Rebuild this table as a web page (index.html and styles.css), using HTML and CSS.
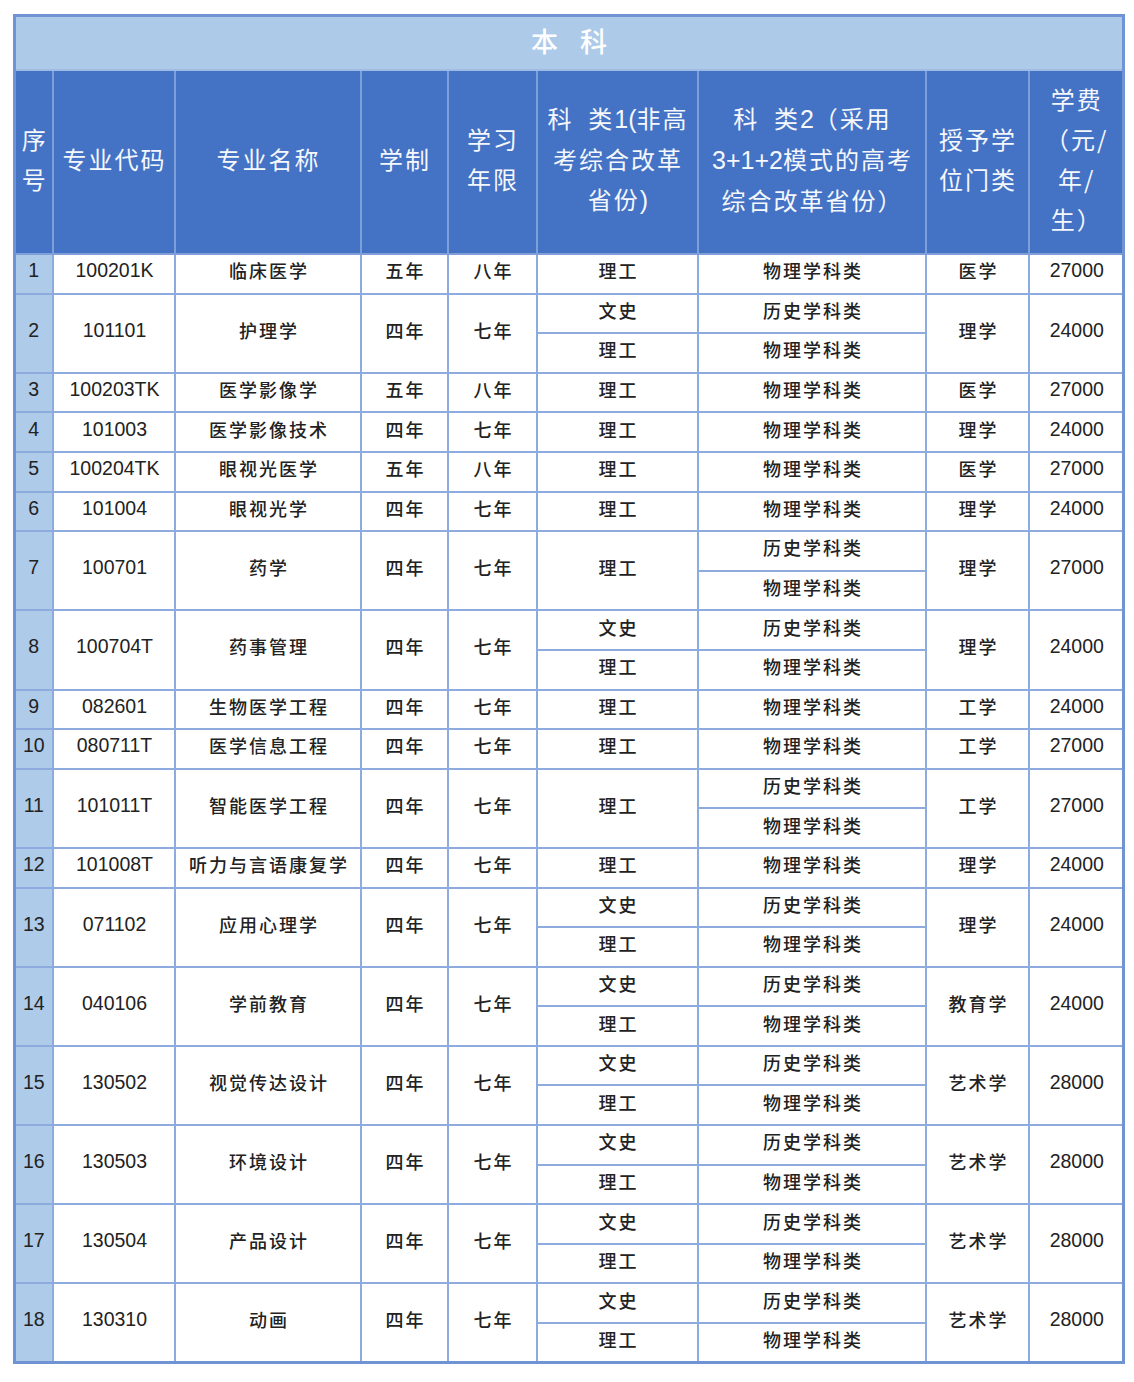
FILE: index.html
```html
<!DOCTYPE html>
<html lang="zh">
<head>
<meta charset="utf-8">
<title>本科</title>
<link rel="stylesheet" href="styles.css">
</head>
<body>
<div class="wrap">
<table class="tbl">
<colgroup>
<col class="c1"><col class="c2"><col class="c3"><col class="c4"><col class="c5"><col class="c6"><col class="c7"><col class="c8"><col class="c9">
</colgroup>
<thead>
<tr class="title"><th colspan="9">本&nbsp;科</th></tr>
<tr class="head">
<th>序<br>号</th>
<th>专业代码</th>
<th>专业名称</th>
<th>学制</th>
<th>学习<br>年限</th>
<th>科&nbsp;&nbsp;类<span class="n">1(</span>非高<br>考综合改革<br>省份<span class="n">)</span></th>
<th>科&nbsp;&nbsp;类<span class="n">2</span>（采用<br><span class="n">3+1+2</span>模式的高考<br>综合改革省份）</th>
<th>授予学<br>位门类</th>
<th>学费<br>（元/<br>年/<br>生）</th>
</tr>
</thead>
<tbody>
<tr><td class="no n">1</td><td class="n">100201K</td><td>临床医学</td><td>五年</td><td>八年</td><td>理工</td><td>物理学科类</td><td>医学</td><td class="n">27000</td></tr>

<tr><td class="no n" rowspan="2">2</td><td class="n" rowspan="2">101101</td><td rowspan="2">护理学</td><td rowspan="2">四年</td><td rowspan="2">七年</td><td>文史</td><td>历史学科类</td><td rowspan="2">理学</td><td class="n" rowspan="2">24000</td></tr>
<tr><td>理工</td><td>物理学科类</td></tr>

<tr><td class="no n">3</td><td class="n">100203TK</td><td>医学影像学</td><td>五年</td><td>八年</td><td>理工</td><td>物理学科类</td><td>医学</td><td class="n">27000</td></tr>
<tr><td class="no n">4</td><td class="n">101003</td><td>医学影像技术</td><td>四年</td><td>七年</td><td>理工</td><td>物理学科类</td><td>理学</td><td class="n">24000</td></tr>
<tr><td class="no n">5</td><td class="n">100204TK</td><td>眼视光医学</td><td>五年</td><td>八年</td><td>理工</td><td>物理学科类</td><td>医学</td><td class="n">27000</td></tr>
<tr><td class="no n">6</td><td class="n">101004</td><td>眼视光学</td><td>四年</td><td>七年</td><td>理工</td><td>物理学科类</td><td>理学</td><td class="n">24000</td></tr>

<tr><td class="no n" rowspan="2">7</td><td class="n" rowspan="2">100701</td><td rowspan="2">药学</td><td rowspan="2">四年</td><td rowspan="2">七年</td><td rowspan="2">理工</td><td>历史学科类</td><td rowspan="2">理学</td><td class="n" rowspan="2">27000</td></tr>
<tr><td>物理学科类</td></tr>

<tr><td class="no n" rowspan="2">8</td><td class="n" rowspan="2">100704T</td><td rowspan="2">药事管理</td><td rowspan="2">四年</td><td rowspan="2">七年</td><td>文史</td><td>历史学科类</td><td rowspan="2">理学</td><td class="n" rowspan="2">24000</td></tr>
<tr><td>理工</td><td>物理学科类</td></tr>

<tr><td class="no n">9</td><td class="n">082601</td><td>生物医学工程</td><td>四年</td><td>七年</td><td>理工</td><td>物理学科类</td><td>工学</td><td class="n">24000</td></tr>
<tr><td class="no n">10</td><td class="n">080711T</td><td>医学信息工程</td><td>四年</td><td>七年</td><td>理工</td><td>物理学科类</td><td>工学</td><td class="n">27000</td></tr>

<tr><td class="no n" rowspan="2">11</td><td class="n" rowspan="2">101011T</td><td rowspan="2">智能医学工程</td><td rowspan="2">四年</td><td rowspan="2">七年</td><td rowspan="2">理工</td><td>历史学科类</td><td rowspan="2">工学</td><td class="n" rowspan="2">27000</td></tr>
<tr><td>物理学科类</td></tr>

<tr><td class="no n">12</td><td class="n">101008T</td><td>听力与言语康复学</td><td>四年</td><td>七年</td><td>理工</td><td>物理学科类</td><td>理学</td><td class="n">24000</td></tr>

<tr><td class="no n" rowspan="2">13</td><td class="n" rowspan="2">071102</td><td rowspan="2">应用心理学</td><td rowspan="2">四年</td><td rowspan="2">七年</td><td>文史</td><td>历史学科类</td><td rowspan="2">理学</td><td class="n" rowspan="2">24000</td></tr>
<tr><td>理工</td><td>物理学科类</td></tr>

<tr><td class="no n" rowspan="2">14</td><td class="n" rowspan="2">040106</td><td rowspan="2">学前教育</td><td rowspan="2">四年</td><td rowspan="2">七年</td><td>文史</td><td>历史学科类</td><td rowspan="2">教育学</td><td class="n" rowspan="2">24000</td></tr>
<tr><td>理工</td><td>物理学科类</td></tr>

<tr><td class="no n" rowspan="2">15</td><td class="n" rowspan="2">130502</td><td rowspan="2">视觉传达设计</td><td rowspan="2">四年</td><td rowspan="2">七年</td><td>文史</td><td>历史学科类</td><td rowspan="2">艺术学</td><td class="n" rowspan="2">28000</td></tr>
<tr><td>理工</td><td>物理学科类</td></tr>

<tr><td class="no n" rowspan="2">16</td><td class="n" rowspan="2">130503</td><td rowspan="2">环境设计</td><td rowspan="2">四年</td><td rowspan="2">七年</td><td>文史</td><td>历史学科类</td><td rowspan="2">艺术学</td><td class="n" rowspan="2">28000</td></tr>
<tr><td>理工</td><td>物理学科类</td></tr>

<tr><td class="no n" rowspan="2">17</td><td class="n" rowspan="2">130504</td><td rowspan="2">产品设计</td><td rowspan="2">四年</td><td rowspan="2">七年</td><td>文史</td><td>历史学科类</td><td rowspan="2">艺术学</td><td class="n" rowspan="2">28000</td></tr>
<tr><td>理工</td><td>物理学科类</td></tr>

<tr><td class="no n" rowspan="2">18</td><td class="n" rowspan="2">130310</td><td rowspan="2">动画</td><td rowspan="2">四年</td><td rowspan="2">七年</td><td>文史</td><td>历史学科类</td><td rowspan="2">艺术学</td><td class="n" rowspan="2">28000</td></tr>
<tr><td>理工</td><td>物理学科类</td></tr>
</tbody>
</table>
</div>
</body>
</html>
```

FILE: styles.css
```css
body {
  margin: 0;
  background: #ffffff;
  font-family: "Noto Sans CJK SC", "Noto Sans", sans-serif;
  color: #222222;
}

.wrap {
  padding: 14px 0 0 13px;
}

.tbl {
  border-collapse: collapse;
  table-layout: fixed;
  width: 1111px;
  border: 3px solid #6f93d3;
}

.c1 { width: 38px; }
.c2 { width: 122px; }
.c3 { width: 186px; }
.c4 { width: 87px; }
.c5 { width: 89px; }
.c6 { width: 161px; }
.c7 { width: 228px; }
.c8 { width: 103px; }
.c9 { width: 95px; }

.tbl th,
.tbl td {
  border: 2px solid #8dabdf;
  padding: 0;
  text-align: center;
  vertical-align: middle;
}

.title th {
  height: 47px;
  background: #adcbe9;
  color: #ffffff;
  font-size: 27px;
  font-weight: 500;
  letter-spacing: 8px;
  padding: 0 0 5px 8px;
  border-color: #9fbde4;
}

.head th {
  height: 176px;
  background: #4472c4;
  color: #f4f7fc;
  font-size: 24px;
  font-weight: 400;
  line-height: 40px;
  letter-spacing: 2px;
  padding: 0 0 6px 2px;
  border-color: #7f9fd8;
}

.head .n {
  font-family: "Liberation Sans", sans-serif;
  letter-spacing: 0;
  font-size: 25px;
}

.tbl tbody tr {
  height: 39.6px;
}

.tbl tbody td {
  font-size: 18px;
  font-weight: 500;
  letter-spacing: 2px;
  line-height: 24px;
  padding: 0 0 7px 3px;
}

.tbl tbody td.n {
  font-family: "Liberation Sans", sans-serif;
  font-weight: 400;
  font-size: 19.5px;
  letter-spacing: 0;
  padding-left: 2px;
}

.tbl tbody td.no {
  background: #aecbe9;
  padding-left: 0;
}
```
